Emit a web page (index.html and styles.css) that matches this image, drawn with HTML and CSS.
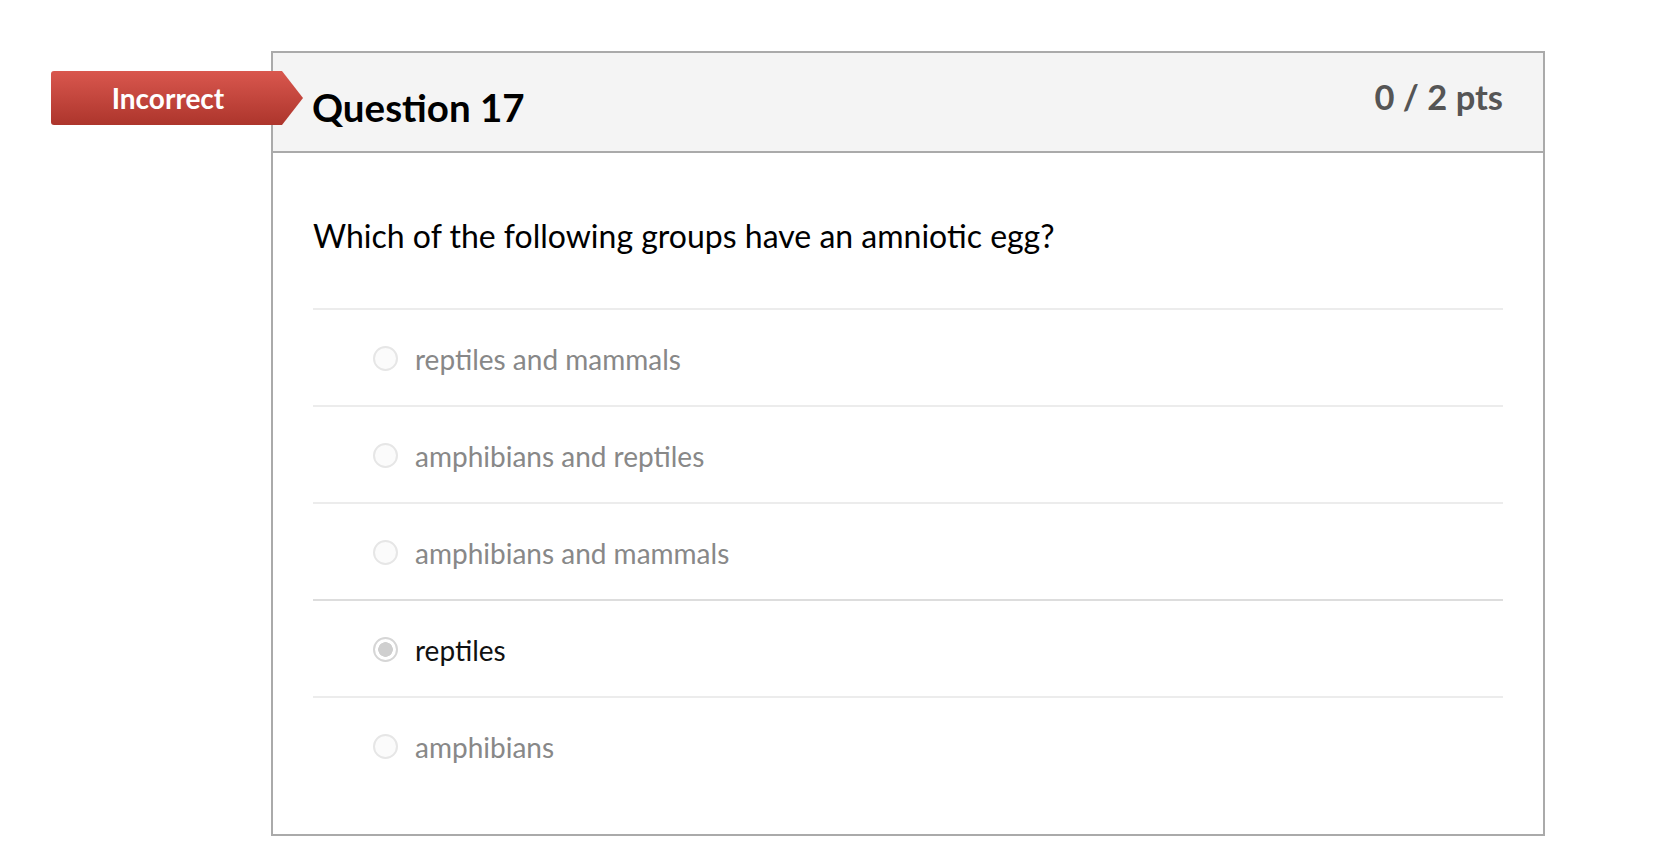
FILE: index.html
```html
<!DOCTYPE html>
<html lang="en">
<head>
<meta charset="utf-8">
<title>Question 17</title>
<link rel="stylesheet" href="styles.css">
</head>
<body>
<div class="page">
  <div class="question-card">
    <div class="status-badge">Incorrect</div>
    <div class="question-header">
      <h2 class="question-title">Question 17</h2>
      <div class="question-points">0 / 2 pts</div>
    </div>
    <div class="question-body">
      <p class="question-text">Which of the following groups have an amniotic egg?</p>
      <div class="answers">
        <div class="answer"><span class="radio"></span><span class="answer-text">reptiles and mammals</span></div>
        <div class="answer"><span class="radio"></span><span class="answer-text">amphibians and reptiles</span></div>
        <div class="answer"><span class="radio"></span><span class="answer-text">amphibians and mammals</span></div>
        <div class="answer selected"><span class="radio"></span><span class="answer-text">reptiles</span></div>
        <div class="answer"><span class="radio"></span><span class="answer-text">amphibians</span></div>
      </div>
    </div>
  </div>
</div>
</body>
</html>
```

FILE: styles.css
```css
html, body {
  margin: 0;
  padding: 0;
  background: #ffffff;
}

body {
  font-family: "Lato", "Liberation Sans", sans-serif;
  color: #000;
}

.page {
  padding: 51px 0 0 271px;
}

.question-card {
  position: relative;
  width: 1270px;
  border: 2px solid #aaaaaa;
  background: #fff;
}

.status-badge {
  position: absolute;
  left: -222px;
  top: 18px;
  width: 252px;
  height: 54px;
  box-sizing: border-box;
  padding-right: 18px;
  display: flex;
  align-items: center;
  justify-content: center;
  font-size: 28px;
  font-weight: 700;
  color: #fff;
  background: linear-gradient(#d9574e, #ad352c);
  border-radius: 3px 0 0 3px;
  clip-path: polygon(0 0, 231px 0, 100% 50%, 231px 100%, 0 100%);
}

.question-header {
  display: flex;
  justify-content: space-between;
  align-items: flex-start;
  padding: 23px 40px 21px 39px;
  background: #f4f4f4;
  border-bottom: 2px solid #aaaaaa;
}

.question-title {
  margin: 8px 0 0 0;
  font-size: 38.5px;
  font-weight: 700;
  line-height: normal;
  color: #000;
}

.question-points {
  font-size: 34.5px;
  font-weight: 700;
  color: #555;
  line-height: normal;
}

.question-body {
  padding: 63px 40px 41px 40px;
}

.question-text {
  margin: 0 0 53px 0;
  font-size: 32px;
  line-height: normal;
  color: #000;
}

.answer {
  display: flex;
  align-items: center;
  gap: 17px;
  height: 97px;
  box-sizing: border-box;
  padding: 2px 0 0 60px;
  border-top: 2px solid #ececec;
}

.answer.selected {
  border-top-color: #dddddd;
}

.radio {
  width: 25px;
  height: 25px;
  box-sizing: border-box;
  border-radius: 50%;
  border: 2px solid #e6e6e6;
  background: #fbfbfb;
  flex: none;
}

.answer.selected .radio {
  border: 2px solid #d6d6d6;
  background: radial-gradient(circle, #cfcfcf 0, #cfcfcf 7px, #ffffff 7.6px);
}

.answer-text {
  font-size: 28px;
  color: #888888;
}

.answer.selected .answer-text {
  color: #111;
}
```
